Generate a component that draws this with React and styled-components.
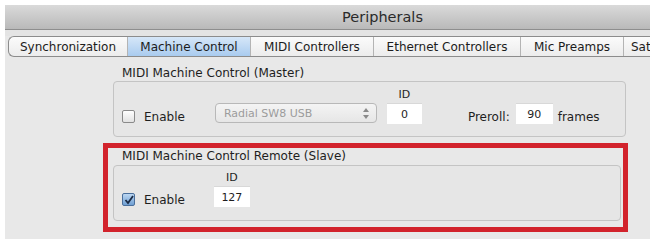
import React from "react";
import styled, { createGlobalStyle } from "styled-components";

const Global = createGlobalStyle`
  html, body { margin: 0; padding: 0; background: #ffffff; }
  body { font-family: "DejaVu Sans", "Liberation Sans", sans-serif; }
`;

const Page = styled.div`
  width: 658px;
  height: 245px;
  padding: 5px 8px 0 5px;
  box-sizing: border-box;
  overflow: hidden;
`;

const Window = styled.div`
  width: 645px;
  display: flex;
  flex-direction: column;
  background: #e8e8e8;
`;

const TitleBar = styled.div`
  height: 24px;
  display: flex;
  align-items: center;
  justify-content: center;
  padding-left: 110px;
  background: linear-gradient(#dadada, #b9b9b9);
  border-bottom: 1px solid #8e8e8e;
  font-size: 14.5px;
  color: #2a2a2a;
`;

const Gap = styled.div`
  height: 6px;
  background: #e4e4e4;
`;

const TabRow = styled.div`
  height: 19px;
  margin-left: 3px;
  display: flex;
  overflow: hidden;
  border: 1px solid #8c8c8c;
  border-right: none;
  border-radius: 6px 0 0 6px;
  background: linear-gradient(#fbfbfb, #ececec);
`;

const Tab = styled.div`
  flex-shrink: 0;
  display: flex;
  align-items: center;
  justify-content: ${(p) => (p.$start ? "flex-start" : "center")};
  padding-left: ${(p) => (p.$start ? 7 : 0)}px;
  width: ${(p) => p.$w}px;
  font-size: 12px;
  color: #1c1c1c;
  white-space: nowrap;
  border-right: 1px solid #b4b4b4;
  box-sizing: border-box;
  background: ${(p) =>
    p.$active ? "linear-gradient(#d6e7f8, #a9cbef)" : "transparent"};
`;

const Body = styled.div`
  height: 182px;
  padding: 9px 24px 0 108px;
  box-sizing: border-box;
  display: flex;
  flex-direction: column;
`;

const GroupLabel = styled.div`
  font-size: 12px;
  color: #1e1e1e;
  padding-left: 9px;
  height: 14px;
  line-height: 14px;
  white-space: nowrap;
`;

const GroupBox = styled.div`
  margin-top: ${(p) => p.$mt}px;
  height: ${(p) => p.$h}px;
  border: 1px solid #c4c4c4;
  border-radius: 4px;
  background: #e6e6e6;
  box-sizing: border-box;
  display: flex;
  align-items: flex-end;
  padding: 0 0 ${(p) => p.$pb}px 8px;
`;

const Highlight = styled.div`
  margin: 6px -2px 0 -10px;
  border: 5px solid #d2232c;
  padding: 1px 2px 6px 5px;
  display: flex;
  flex-direction: column;
`;

const Check = styled.div`
  width: 11px;
  height: 11px;
  border-radius: 2px;
  border: 1px solid ${(p) => (p.$on ? "#4a6f9c" : "#8a8a8a")};
  background: ${(p) =>
    p.$on ? "linear-gradient(#bcd7f2, #6f9fd3)" : "linear-gradient(#ffffff, #e2e2e2)"};
  display: flex;
  align-items: center;
  justify-content: center;
  flex-shrink: 0;
  margin-bottom: 1px;
`;

const Label = styled.span`
  font-size: 12px;
  color: #1e1e1e;
  margin-left: ${(p) => p.$ml || 0}px;
  line-height: 14px;
`;

const Field = styled.div`
  display: flex;
  flex-direction: column;
  align-items: center;
  margin-left: ${(p) => p.$ml}px;
`;

const FieldLabel = styled.div`
  font-size: 11px;
  color: #1e1e1e;
  line-height: 13px;
  margin-bottom: 2px;
`;

const Input = styled.div`
  width: ${(p) => p.$w}px;
  height: 21px;
  background: #ffffff;
  border-top: 1px solid #d8d8d8;
  font-size: 11px;
  color: #1e1e1e;
  display: flex;
  align-items: center;
  justify-content: center;
  box-sizing: border-box;
`;

const Popup = styled.div`
  width: 162px;
  height: 20px;
  margin-left: 30px;
  border: 1px solid #b8b8b8;
  border-radius: 4px;
  background: linear-gradient(#f4f4f4, #e6e6e6);
  box-sizing: border-box;
  display: flex;
  align-items: center;
  justify-content: space-between;
  padding: 0 7px 0 8px;
  font-size: 11px;
  color: #9c9c9c;
  margin-bottom: 1px;
`;

const Row = styled.div`
  display: flex;
  align-items: center;
`;

const Arrows = () => (
  <svg width="6" height="11" viewBox="0 0 6 11">
    <path d="M0 4 L3 0 L6 4 Z" fill="#8a8a8a" />
    <path d="M0 7 L3 11 L6 7 Z" fill="#8a8a8a" />
  </svg>
);

const Tick = () => (
  <svg width="10" height="10" viewBox="0 0 10 10">
    <path d="M1.5 5 L4 8 L9 1" stroke="#1a2a44" strokeWidth="1.8" fill="none" />
  </svg>
);

export default function App() {
  return (
    <Page>
      <Global />
      <Window>
        <TitleBar>Peripherals</TitleBar>
        <Gap />
        <TabRow>
          <Tab $w={119}>Synchronization</Tab>
          <Tab $w={123} $active>Machine Control</Tab>
          <Tab $w={123}>MIDI Controllers</Tab>
          <Tab $w={147}>Ethernet Controllers</Tab>
          <Tab $w={103}>Mic Preamps</Tab>
          <Tab $w={80} $start>Satellites</Tab>
        </TabRow>
        <Body>
          <GroupLabel>MIDI Machine Control (Master)</GroupLabel>
          <GroupBox $mt={1} $h={56} $pb={12}>
            <Row>
              <Check />
              <Label $ml={9}>Enable</Label>
            </Row>
            <Popup>
              <span>Radial SW8 USB</span>
              <Arrows />
            </Popup>
            <Field $ml={10}>
              <FieldLabel>ID</FieldLabel>
              <Input $w={35}>0</Input>
            </Field>
            <Row>
              <Label $ml={46}>Preroll:</Label>
            </Row>
            <Field $ml={6}>
              <Input $w={37}>90</Input>
            </Field>
            <Row>
              <Label $ml={5}>frames</Label>
            </Row>
          </GroupBox>
          <Highlight>
            <GroupLabel>MIDI Machine Control Remote (Slave)</GroupLabel>
            <GroupBox $mt={2} $h={56} $pb={13}>
              <Row>
                <Check $on>
                  <Tick />
                </Check>
                <Label $ml={9}>Enable</Label>
              </Row>
              <Field $ml={29}>
                <FieldLabel>ID</FieldLabel>
                <Input $w={36}>127</Input>
              </Field>
            </GroupBox>
          </Highlight>
        </Body>
      </Window>
    </Page>
  );
}
